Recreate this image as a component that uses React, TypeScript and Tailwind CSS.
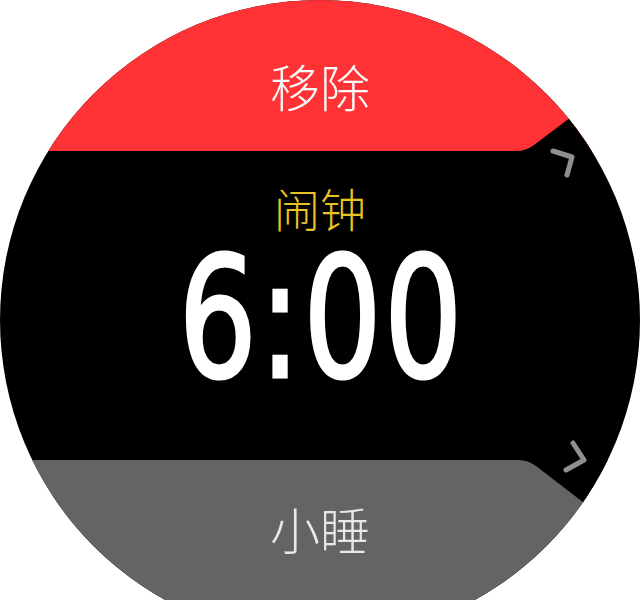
export default function App() {
  return (
    <div className="w-[640px] h-[600px] bg-white overflow-hidden relative">
      <div
        className="w-[640px] h-[640px] rounded-full overflow-hidden bg-black flex flex-col relative"
        style={{ fontFamily: '"Noto Sans CJK SC", "Noto Sans", sans-serif' }}
      >
        <div className="h-[151px] shrink-0 bg-[#ff3236] relative flex flex-col items-center">
          <span className="mt-[60px] text-[50px] leading-[50px] font-light text-[#fafafa]">移除</span>
          <svg className="absolute left-0 top-0" width="640" height="151" viewBox="0 0 640 151">
            <path d="M516 151 Q526 151 534 145 L640 65 V151 Z" fill="#000" />
          </svg>
        </div>
        <div className="h-[309px] shrink-0 flex flex-col items-center">
          <span className="mt-[33px] text-[46px] leading-[46px] font-light text-[#e9c321]">闹钟</span>
          <span
            className="mt-[24px] ml-[4px] text-[167px] leading-[130px] text-white scale-x-[0.82] tracking-[3px] [-webkit-text-stroke:3px_#ffffff]"
            style={{ fontFamily: '"DejaVu Sans Condensed", "DejaVu Sans", sans-serif' }}
          >
            6:00
          </span>
        </div>
        <div className="flex-1 bg-[#636562] relative flex flex-col items-center">
          <span className="mt-[43px] text-[50px] leading-[50px] font-light text-[#e8e8e8]">小睡</span>
          <svg className="absolute left-0 top-0" width="640" height="100" viewBox="0 0 640 100">
            <path d="M518 0 Q528 0 536 6 L640 86 V0 Z" fill="#000" />
          </svg>
        </div>
        <svg className="absolute left-0 top-0 pointer-events-none" width="640" height="600" viewBox="0 0 640 600">
          <path d="M553 151 L572 157 L567 175" fill="none" stroke="#8f8f8f" strokeWidth="5" strokeLinecap="round" strokeLinejoin="round" />
          <path d="M573 443 L584 460 L566 470" fill="none" stroke="#8f8f8f" strokeWidth="5" strokeLinecap="round" strokeLinejoin="round" />
        </svg>
      </div>
    </div>
  );
}
